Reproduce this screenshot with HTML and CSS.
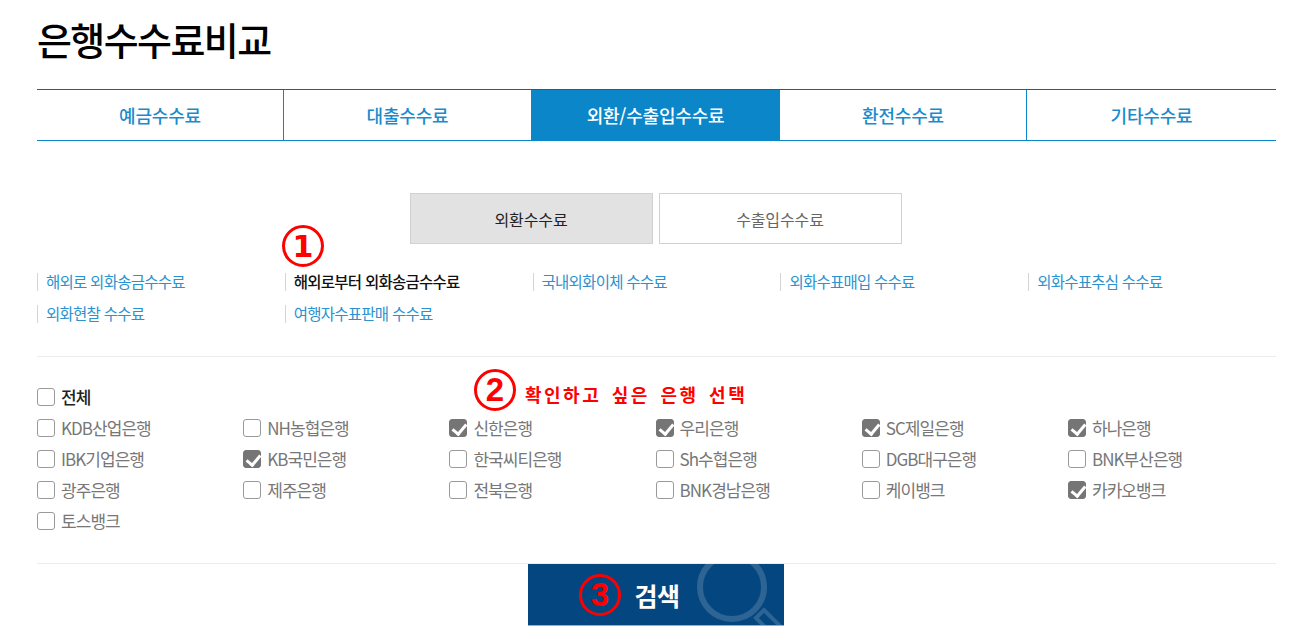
FILE: index.html
```html
<!DOCTYPE html>
<html lang="ko">
<head>
  <meta charset="utf-8">
  <title>은행수수료비교</title>
  <link rel="stylesheet" href="styles.css">
</head>
<body>
  <div class="page">
    <h1 class="title">은행수수료비교</h1>

    <div class="tabs">
      <a class="tab">예금수수료</a>
      <a class="tab">대출수수료</a>
      <a class="tab active">외환/수출입수수료</a>
      <a class="tab">환전수수료</a>
      <a class="tab">기타수수료</a>
    </div>

    <div class="subtabs">
      <a class="subtab active">외환수수료</a>
      <a class="subtab">수출입수수료</a>
    </div>

    <ul class="links">
      <li><a>해외로 외화송금수수료</a></li>
      <li class="current"><a>해외로부터 외화송금수수료</a></li>
      <li><a>국내외화이체 수수료</a></li>
      <li><a>외화수표매입 수수료</a></li>
      <li><a>외화수표추심 수수료</a></li>
      <li><a>외화현찰 수수료</a></li>
      <li><a>여행자수표판매 수수료</a></li>
    </ul>

    <div class="banks">
      <label class="bank all"><input type="checkbox"><span>전체</span></label>
      <label class="bank"><input type="checkbox"><span>KDB산업은행</span></label>
      <label class="bank"><input type="checkbox"><span>NH농협은행</span></label>
      <label class="bank"><input type="checkbox" checked><span>신한은행</span></label>
      <label class="bank"><input type="checkbox" checked><span>우리은행</span></label>
      <label class="bank"><input type="checkbox" checked><span>SC제일은행</span></label>
      <label class="bank"><input type="checkbox" checked><span>하나은행</span></label>
      <label class="bank"><input type="checkbox"><span>IBK기업은행</span></label>
      <label class="bank"><input type="checkbox" checked><span>KB국민은행</span></label>
      <label class="bank"><input type="checkbox"><span>한국씨티은행</span></label>
      <label class="bank"><input type="checkbox"><span>Sh수협은행</span></label>
      <label class="bank"><input type="checkbox"><span>DGB대구은행</span></label>
      <label class="bank"><input type="checkbox"><span>BNK부산은행</span></label>
      <label class="bank"><input type="checkbox"><span>광주은행</span></label>
      <label class="bank"><input type="checkbox"><span>제주은행</span></label>
      <label class="bank"><input type="checkbox"><span>전북은행</span></label>
      <label class="bank"><input type="checkbox"><span>BNK경남은행</span></label>
      <label class="bank"><input type="checkbox"><span>케이뱅크</span></label>
      <label class="bank"><input type="checkbox" checked><span>카카오뱅크</span></label>
      <label class="bank"><input type="checkbox"><span>토스뱅크</span></label>
    </div>

    <div class="search-row">
      <button class="search" type="button">
        <svg class="search-icon" width="256" height="62" viewBox="0 0 256 62">
          <circle cx="204" cy="23" r="32" fill="none" stroke="#fff" stroke-width="6"/>
          <path d="M228 54l8-8 24 24-8 8z" fill="none" stroke="#fff" stroke-width="4"/>
        </svg>
        <span class="mark mark-3">3</span>
        <span class="search-label">검색</span>
      </button>
    </div>

    <!-- annotations drawn on top of the page -->
    <span class="mark mark-1">1</span>
    <span class="mark mark-2">2</span>
    <span class="note">확인하고 싶은 은행 선택</span>
  </div>
</body>
</html>
```

FILE: styles.css
```css
* {
  box-sizing: border-box;
  margin: 0;
  padding: 0;
}

body {
  font-family: "Noto Sans CJK KR", "Noto Sans", sans-serif;
  background-color: #fff;
  color: #777;
}

.page {
  position: relative;
  width: 1291px;
  padding-left: 37px;
  padding-right: 15px;
}

.title {
  height: 89px;
  padding-top: 12px;
  font-size: 38px;
  line-height: 54px;
  font-weight: 500;
  letter-spacing: -1.6px;
  color: #000;
}

/* top tabs */
.tabs {
  display: grid;
  grid-template-columns: 246px 248px 248px 247px 1fr;
  height: 52px;
  border-top: 1px solid #1f5c94;
  border-bottom: 1px solid #0b86c9;
}

.tab {
  display: flex;
  justify-content: center;
  align-items: center;
  font-size: 18px;
  font-weight: 500;
  letter-spacing: -0.2px;
  color: #1a8ccb;
  border-left: 1px solid #0b86c9;
}
.tab:first-child {
  border-left: 0;
}
.tab.active {
  background-color: #0b86c9;
  color: #fff;
}

/* sub tabs */
.subtabs {
  display: flex;
  justify-content: center;
  gap: 6px;
  margin-top: 52px;
  padding-right: 2px;
}

.subtab {
  display: flex;
  justify-content: center;
  align-items: center;
  width: 243px;
  height: 51px;
  font-size: 16px;
  letter-spacing: -0.1px;
  color: #666;
  border: 1px solid #d2d2d2;
}
.subtab.active {
  background-color: #e2e2e2;
  color: #222;
}

/* fee links */
.links {
  display: grid;
  grid-template-columns: repeat(5, 1fr);
  grid-auto-rows: 32px;
  margin-top: 22px;
  padding-bottom: 26px;
  border-bottom: 1px solid #ececec;
  list-style: none;
}

.links li {
  display: flex;
  align-items: center;
  font-size: 15.5px;
  letter-spacing: -0.75px;
  color: #2a93cf;
}
.links li a {
  padding-left: 8px;
  padding-bottom: 2px;
  line-height: 16px;
  border-left: 1px solid #d4d4d4;
}
.links li.current {
  color: #111;
  font-weight: 500;
}

/* bank checkboxes */
.banks {
  display: grid;
  grid-template-columns: repeat(6, 206.2px);
  grid-auto-rows: 31px;
  padding-top: 24px;
  padding-bottom: 27px;
  border-bottom: 1px solid #ececec;
}

.bank {
  display: flex;
  align-items: center;
  gap: 6px;
  font-size: 17px;
  letter-spacing: -0.95px;
  color: #777;
}
.bank.all {
  grid-column: 1 / -1;
  color: #222;
  font-weight: 500;
}

.bank input {
  appearance: none;
  position: relative;
  flex: none;
  width: 18px;
  height: 18px;
  border: 1px solid #9a9a9a;
  border-radius: 3px;
  background-color: #fff;
}
.bank input:checked {
  background-color: #757575;
  border-color: #757575;
}
.bank input:checked::before { /*check mark*/
  content: "";
  position: absolute;
  left: 5px;
  top: 1.5px;
  width: 6px;
  height: 11px;
  border-right: 3px solid #fff;
  border-bottom: 3px solid #fff;
  transform: rotate(40deg);
}

/* search button */
.search-row {
  display: flex;
  justify-content: center;
  padding-right: 1px;
}

.search {
  position: relative;
  overflow: hidden;
  display: flex;
  align-items: center;
  justify-content: center;
  width: 256px;
  height: 62px;
  background-color: #044680;
  border: 0;
  border-bottom: 1px solid #8fb0d0;
  font-family: inherit;
}

.search-icon {
  position: absolute;
  left: 0;
  top: 0;
  opacity: 0.16;
}

.search-label {
  position: relative;
  margin-left: 2px;
  font-size: 25px;
  font-weight: 700;
  letter-spacing: -0.5px;
  color: #fff;
}

/* red annotations */
.mark {
  position: absolute;
  display: flex;
  justify-content: center;
  align-items: center;
  width: 42px;
  height: 42px;
  border: 3px solid #ff0000;
  border-radius: 50%;
  font-family: "Liberation Sans", sans-serif;
  font-size: 33px;
  font-weight: 700;
  color: #ff0000;
}
.mark-1 {
  left: 282px;
  top: 225px;
  font-family: "DejaVu Sans", sans-serif;
  font-size: 30px;
}
.mark-2 {
  left: 474px;
  top: 369px;
}
.mark-3 {
  left: 51px;
  top: 10px;
}

.note {
  position: absolute;
  left: 525px;
  top: 381px;
  font-size: 18px;
  line-height: 26px;
  font-weight: 700;
  letter-spacing: 2.5px;
  word-spacing: 3px;
  color: #ff0000;
}
```
